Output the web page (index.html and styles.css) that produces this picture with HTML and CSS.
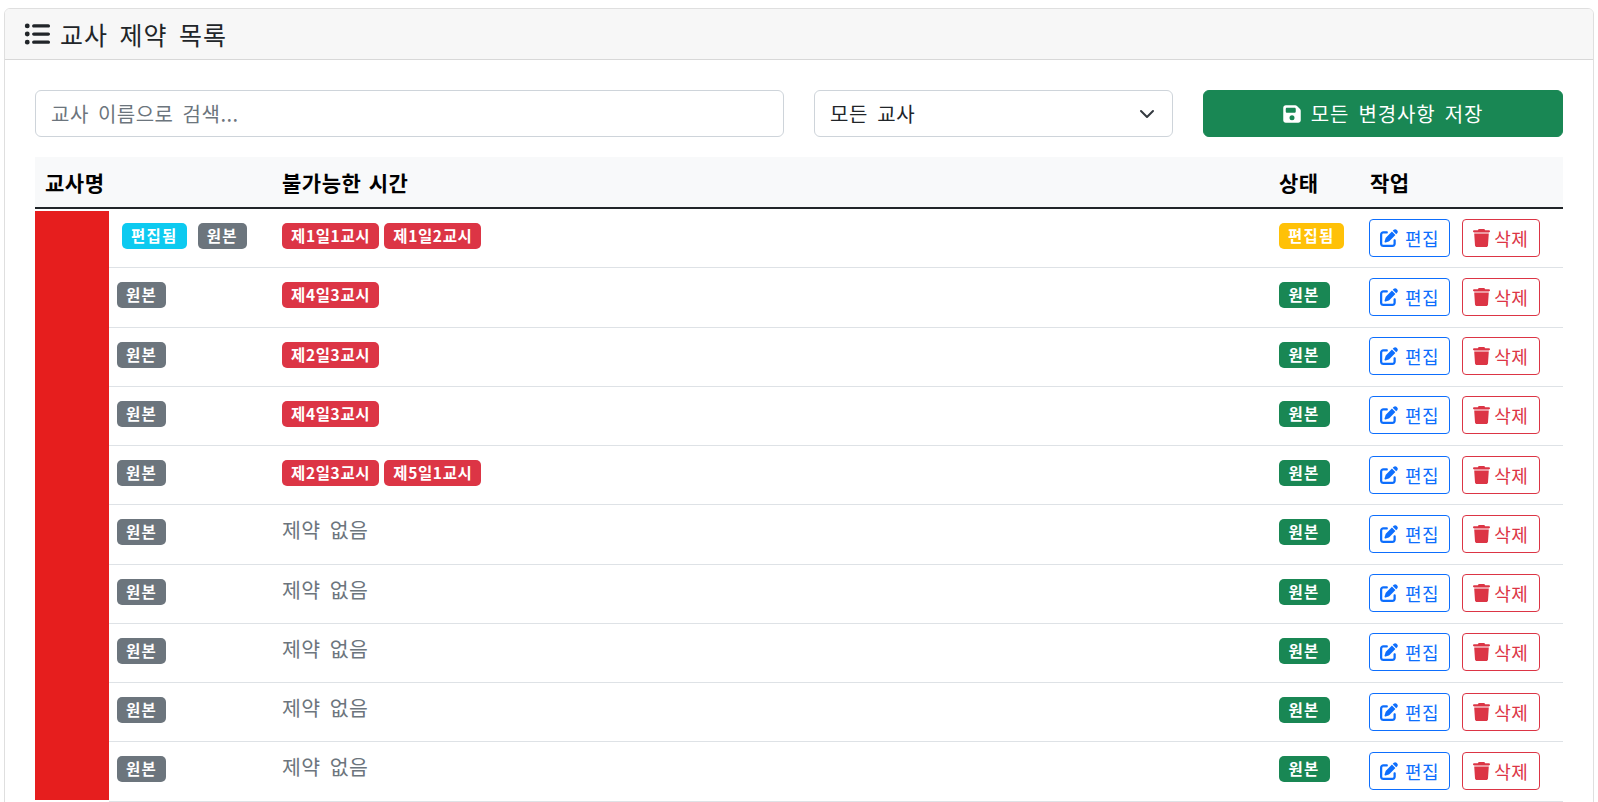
FILE: index.html
```html
<!DOCTYPE html>
<html lang="ko">
<head>
<meta charset="utf-8">
<title>교사 제약 목록</title>
<link rel="stylesheet" href="styles.css">
</head>
<body>
<svg class="sprite" aria-hidden="true">
  <symbol id="i-list" viewBox="0 0 512 512"><path d="M64 144a48 48 0 1 0 0-96 48 48 0 1 0 0 96zM192 64c-17.7 0-32 14.3-32 32s14.3 32 32 32H480c17.7 0 32-14.3 32-32s-14.3-32-32-32H192zm0 160c-17.7 0-32 14.3-32 32s14.3 32 32 32H480c17.7 0 32-14.3 32-32s-14.3-32-32-32H192zm0 160c-17.7 0-32 14.3-32 32s14.3 32 32 32H480c17.7 0 32-14.3 32-32s-14.3-32-32-32H192zM64 464a48 48 0 1 0 0-96 48 48 0 1 0 0 96zm48-208a48 48 0 1 0 -96 0 48 48 0 1 0 96 0z"/></symbol>
  <symbol id="i-save" viewBox="0 0 448 512"><path d="M64 32C28.7 32 0 60.7 0 96V416c0 35.3 28.7 64 64 64H384c35.3 0 64-28.7 64-64V173.3c0-17-6.7-33.3-18.7-45.3L352 50.7C340 38.7 323.7 32 306.7 32H64zm0 96c0-17.7 14.3-32 32-32H288c17.7 0 32 14.3 32 32v64c0 17.7-14.3 32-32 32H96c-17.7 0-32-14.3-32-32V128zM224 288a64 64 0 1 1 0 128 64 64 0 1 1 0-128z"/></symbol>
  <symbol id="i-edit" viewBox="0 0 512 512"><path d="M471.6 21.7c-21.9-21.9-57.3-21.9-79.2 0L362.3 51.7l97.9 97.9 30.1-30.1c21.9-21.9 21.9-57.3 0-79.2L471.6 21.7zm-299.2 220c-6.1 6.1-10.8 13.6-13.5 21.9l-29.6 88.8c-2.9 8.6-.6 18.1 5.8 24.6s15.9 8.7 24.6 5.8l88.8-29.6c8.2-2.7 15.7-7.4 21.9-13.5L437.7 172.3 339.7 74.3 172.4 241.7zM96 64C43 64 0 107 0 160V416c0 53 43 96 96 96H352c53 0 96-43 96-96V320c0-17.7-14.3-32-32-32s-32 14.3-32 32v96c0 17.7-14.3 32-32 32H96c-17.7 0-32-14.3-32-32V160c0-17.7 14.3-32 32-32h96c17.7 0 32-14.3 32-32s-14.3-32-32-32H96z"/></symbol>
  <symbol id="i-trash" viewBox="0 0 448 512" preserveAspectRatio="none"><path d="M135.2 17.7L128 32H32C14.3 32 0 46.3 0 64S14.3 96 32 96H416c17.7 0 32-14.3 32-32s-14.3-32-32-32H320l-7.2-14.3C307.4 6.8 296.3 0 284.2 0H163.8c-12.1 0-23.2 6.8-28.6 17.7zM416 128H32L53.2 467c1.6 25.3 22.6 45 47.9 45H346.9c25.3 0 46.3-19.7 47.9-45L416 128z"/></symbol>
</svg>
<section class="card">
  <header class="card-header">
    <svg class="title-icon"><use href="#i-list"/></svg>
    <h1 class="title">교사 제약 목록</h1>
  </header>
  <div class="card-body">
    <div class="toolbar">
      <input class="search" type="text" placeholder="교사 이름으로 검색...">
      <div class="select">
        <span>모든 교사</span>
        <svg class="chevron" viewBox="0 0 16 16"><path d="M2 5l6 6 6-6"/></svg>
      </div>
      <button class="save" type="button"><svg class="save-icon"><use href="#i-save"/></svg>모든 변경사항 저장</button>
    </div>
    <table class="grid">
      <colgroup><col class="c-name"><col class="c-flag"><col class="c-time"><col class="c-state"><col class="c-act"></colgroup>
      <thead>
        <tr><th colspan="2">교사명</th><th>불가능한 시간</th><th>상태</th><th class="th-act">작업</th></tr>
      </thead>
      <tbody>
        <tr>
          <td class="name" rowspan="10"></td>
          <td class="flag"><span class="badge info inset">편집됨</span><span class="badge gray inset-wide">원본</span></td>
          <td class="time"><span class="badge danger">제1일1교시</span><span class="badge danger">제1일2교시</span></td>
          <td class="state"><span class="badge warn">편집됨</span></td>
          <td class="act"><button class="btn blue" type="button"><svg><use href="#i-edit"/></svg>편집</button><button class="btn red" type="button"><svg class="narrow"><use href="#i-trash"/></svg>삭제</button></td>
        </tr>
        <tr>
          <td class="flag"><span class="badge gray">원본</span></td>
          <td class="time"><span class="badge danger">제4일3교시</span></td>
          <td class="state"><span class="badge green">원본</span></td>
          <td class="act"><button class="btn blue" type="button"><svg><use href="#i-edit"/></svg>편집</button><button class="btn red" type="button"><svg class="narrow"><use href="#i-trash"/></svg>삭제</button></td>
        </tr>
        <tr>
          <td class="flag"><span class="badge gray">원본</span></td>
          <td class="time"><span class="badge danger">제2일3교시</span></td>
          <td class="state"><span class="badge green">원본</span></td>
          <td class="act"><button class="btn blue" type="button"><svg><use href="#i-edit"/></svg>편집</button><button class="btn red" type="button"><svg class="narrow"><use href="#i-trash"/></svg>삭제</button></td>
        </tr>
        <tr>
          <td class="flag"><span class="badge gray">원본</span></td>
          <td class="time"><span class="badge danger">제4일3교시</span></td>
          <td class="state"><span class="badge green">원본</span></td>
          <td class="act"><button class="btn blue" type="button"><svg><use href="#i-edit"/></svg>편집</button><button class="btn red" type="button"><svg class="narrow"><use href="#i-trash"/></svg>삭제</button></td>
        </tr>
        <tr>
          <td class="flag"><span class="badge gray">원본</span></td>
          <td class="time"><span class="badge danger">제2일3교시</span><span class="badge danger">제5일1교시</span></td>
          <td class="state"><span class="badge green">원본</span></td>
          <td class="act"><button class="btn blue" type="button"><svg><use href="#i-edit"/></svg>편집</button><button class="btn red" type="button"><svg class="narrow"><use href="#i-trash"/></svg>삭제</button></td>
        </tr>
        <tr>
          <td class="flag"><span class="badge gray">원본</span></td>
          <td class="time"><span class="none">제약 없음</span></td>
          <td class="state"><span class="badge green">원본</span></td>
          <td class="act"><button class="btn blue" type="button"><svg><use href="#i-edit"/></svg>편집</button><button class="btn red" type="button"><svg class="narrow"><use href="#i-trash"/></svg>삭제</button></td>
        </tr>
        <tr>
          <td class="flag"><span class="badge gray">원본</span></td>
          <td class="time"><span class="none">제약 없음</span></td>
          <td class="state"><span class="badge green">원본</span></td>
          <td class="act"><button class="btn blue" type="button"><svg><use href="#i-edit"/></svg>편집</button><button class="btn red" type="button"><svg class="narrow"><use href="#i-trash"/></svg>삭제</button></td>
        </tr>
        <tr>
          <td class="flag"><span class="badge gray">원본</span></td>
          <td class="time"><span class="none">제약 없음</span></td>
          <td class="state"><span class="badge green">원본</span></td>
          <td class="act"><button class="btn blue" type="button"><svg><use href="#i-edit"/></svg>편집</button><button class="btn red" type="button"><svg class="narrow"><use href="#i-trash"/></svg>삭제</button></td>
        </tr>
        <tr>
          <td class="flag"><span class="badge gray">원본</span></td>
          <td class="time"><span class="none">제약 없음</span></td>
          <td class="state"><span class="badge green">원본</span></td>
          <td class="act"><button class="btn blue" type="button"><svg><use href="#i-edit"/></svg>편집</button><button class="btn red" type="button"><svg class="narrow"><use href="#i-trash"/></svg>삭제</button></td>
        </tr>
        <tr>
          <td class="flag"><span class="badge gray">원본</span></td>
          <td class="time"><span class="none">제약 없음</span></td>
          <td class="state"><span class="badge green">원본</span></td>
          <td class="act"><button class="btn blue" type="button"><svg><use href="#i-edit"/></svg>편집</button><button class="btn red" type="button"><svg class="narrow"><use href="#i-trash"/></svg>삭제</button></td>
        </tr>
      </tbody>
    </table>
  </div>
</section>
</body>
</html>
```
FILE: styles.css
```css
* { box-sizing: border-box; }
html, body { overflow: hidden; height: 100%; }
body {
  margin: 8px 4px 0;
  background: #fff;
  color: #212529;
  font-family: "Noto Sans CJK KR", "Noto Sans", sans-serif;
  font-size: 18px;
}
.sprite { display: none; }
.card {
  border: 1px solid rgba(0, 0, 0, .125);
  border-radius: 6px;
}
.card-header {
  display: flex;
  align-items: center;
  height: 51px;
  padding: 0 19px;
  background: #f7f7f7;
  border-bottom: 1px solid rgba(0, 0, 0, .125);
  border-radius: 5px 5px 0 0;
}
.title-icon { width: 26px; height: 26px; fill: #212529; margin-right: 10px; }
.title { margin: 0; font-size: 25px; font-weight: 400; line-height: 1; letter-spacing: 1px; word-spacing: 3.5px; }
.card-body { padding: 30px 30px 20px; }
.toolbar { display: flex; gap: 30px; align-items: stretch; height: 47px; margin-bottom: 20px; }
.search {
  flex: 0 0 749px;
  padding: 0 15px;
  border: 1px solid #ced4da;
  border-radius: 6px;
  font: inherit;
  font-size: 20px;
  letter-spacing: .5px;
  word-spacing: 3px;
}
.search::placeholder { color: #6c757d; opacity: 1; }
.select {
  flex: 0 0 359px;
  display: flex;
  align-items: center;
  justify-content: space-between;
  padding: 0 17px 0 15px;
  border: 1px solid #ced4da;
  border-radius: 6px;
  font-size: 20px;
  letter-spacing: .6px;
  word-spacing: 3px;
}
.chevron { width: 16px; height: 16px; fill: none; stroke: #343a40; stroke-width: 2; stroke-linecap: round; stroke-linejoin: round; }
.save {
  flex: 1;
  display: flex;
  align-items: center;
  justify-content: center;
  gap: 10px;
  border: 1px solid #198754;
  border-radius: 6px;
  background: #198754;
  color: #fff;
  font: inherit;
  font-size: 20px;
  letter-spacing: .8px;
  word-spacing: 3px;
}
.save-icon { width: 18px; height: 20px; fill: #fff; }
.grid { width: 1528px; border-collapse: separate; border-spacing: 0; table-layout: fixed; }
.c-name { width: 74px; }
.c-flag { width: 163px; }
.c-time { width: 997px; }
.c-state { width: 90px; }
.c-act { width: 204px; }
.grid th {
  height: 52px;
  padding: 0 10px;
  background: #f8f9fa;
  border-bottom: 2px solid #212529;
  color: #000;
  font-size: 21px;
  font-weight: 700;
  letter-spacing: .5px;
  text-align: left;
  word-spacing: 1px;
}
.grid .th-act { padding-left: 11px; }
.grid td {
  height: 59.25px;
  padding: 14px 8px 0;
  border-bottom: 1px solid #dee2e6;
  vertical-align: top;
}
.grid .name {
  padding: 0;
  background: #e61e1e;
  background-clip: padding-box;
  border-top: 2px solid #fff;
  border-bottom: 2px solid #fff;
}
.grid .time { padding-left: 10px; }
.grid .state { padding-left: 10px; }
.grid .act { padding: 9.5px 10px 0; white-space: nowrap; }
.badge {
  display: inline-block;
  height: 26px;
  padding: 0 9px;
  border-radius: 5px;
  color: #fff;
  font-size: 15.5px;
  font-weight: 700;
  letter-spacing: 1.3px;
  line-height: 25px;
  vertical-align: top;
}
.inset { margin-left: 5px; }
.inset-wide { margin-left: 11px; }
.time .badge + .badge { margin-left: 5px; }
.info { background: #0dcaf0; }
.gray { background: #6c757d; }
.danger { background: #dc3545; letter-spacing: .65px; }
.warn { background: #ffc107; }
.green { background: #198754; padding: 0 10px 0 9.5px; }
.none { display: block; margin-top: -4px; color: #6c757d; font-size: 20.5px; letter-spacing: .4px; line-height: 28px; word-spacing: 3px; }
.btn {
  display: inline-flex;
  align-items: center;
  height: 38px;
  padding: 0 10px;
  border: 1px solid;
  border-radius: 4px;
  background: #fff;
  font: inherit;
  font-size: 18px;
  letter-spacing: .5px;
  vertical-align: top;
}
.btn svg { width: 18px; height: 18px; margin-right: 7px; fill: currentColor; }
.btn svg.narrow { width: 17px; margin-right: 4.5px; }
.blue { color: #0d6efd; }
.red { color: #dc3545; margin-left: 12px; padding: 0 11px 0 9.5px; }
```
